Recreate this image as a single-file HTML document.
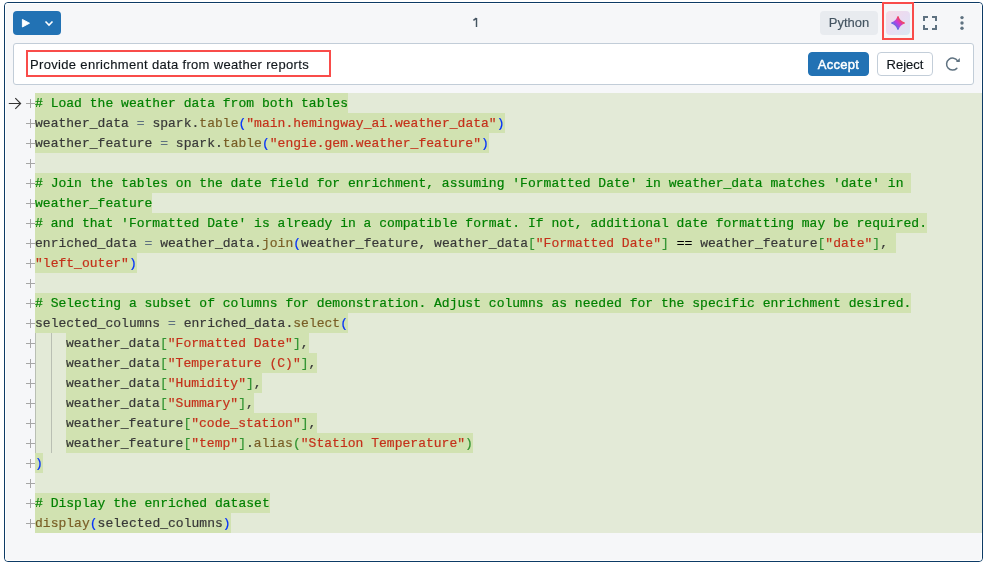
<!DOCTYPE html>
<html><head><meta charset="utf-8">
<style>
html,body{margin:0;padding:0;background:#fff;width:985px;height:565px;overflow:hidden;}
body{position:relative;font-family:"Liberation Sans",sans-serif;}
.pypill,.num,.ptext,.btn,.tx{will-change:transform;}
.pypill,.ptext,.reject{-webkit-text-stroke:0.15px currentColor;}
.cell{position:absolute;left:4px;top:2px;width:979px;height:560px;box-sizing:border-box;border:1px solid #0d3b66;border-radius:4px;background:#fff;}
.cellin{position:absolute;left:0;top:0;right:0;bottom:0;border:1px solid #fff;border-radius:3px;background:#f6f7f9;overflow:hidden;}
.abs{position:absolute;}
.run{position:absolute;left:13px;top:11px;width:48px;height:24px;background:#2272b4;border-radius:4px;}
.num{position:absolute;left:472px;top:15px;font-size:13px;color:#445461;line-height:16px;}
.pypill{position:absolute;left:820px;top:11px;width:58px;height:24px;background:#e8ebef;border-radius:4px;color:#445461;font-size:13px;line-height:24px;text-align:center;}
.ai{position:absolute;left:886px;top:11px;width:24px;height:24px;border-radius:4px;background:linear-gradient(135deg,#f6dbe5,#e9dcf2 50%,#d8e8f3);}
.redbox{position:absolute;box-sizing:border-box;border:2px solid #f94c4a;}
.prompt{position:absolute;left:13px;top:43px;width:961px;height:42px;box-sizing:border-box;border:1px solid #c2cdd8;border-radius:3px;background:#fff;}
.ptext{position:absolute;left:30px;top:57px;font-size:13px;line-height:16px;color:#11171c;white-space:nowrap;letter-spacing:0.33px;}
.btn{position:absolute;top:52px;height:24px;box-sizing:border-box;border-radius:4px;font-size:13px;line-height:24px;text-align:center;}
.accept{left:808px;width:61px;background:#2272b4;color:#fff;border:1px solid #2272b4;-webkit-text-stroke:0.45px #fff;letter-spacing:0.3px;}
.reject{left:877px;width:56px;background:#fff;color:#11171c;border:1px solid #c3ced9;}
.code{position:absolute;left:35px;top:93px;width:947px;height:440px;background:#e3ead7;}
.ln{position:absolute;left:35px;height:20px;width:947px;}
.hl{position:absolute;top:0;height:20px;background:#d1e2b1;}
.tx{position:absolute;top:1px;-webkit-text-stroke:0.2px currentColor;height:20px;line-height:20px;font-family:"Liberation Mono",monospace;font-size:13px;white-space:pre;color:#333;letter-spacing:0.023px;}
.g{position:absolute;top:0;width:1px;height:20px;background:#b9bfb3;}
.pl{position:absolute;left:26px;width:9px;height:9px;margin-top:6px;}
.pl:before{content:"";position:absolute;left:0;top:4px;width:9px;height:1px;background:#a6a6a6;}
.pl:after{content:"";position:absolute;left:4px;top:0;width:1px;height:9px;background:#a6a6a6;}
.tx span{-webkit-text-stroke:0.2px currentColor}.c{color:#008000}.i{color:#383838}.o{color:#5f7281}.e{color:#000}.f{color:#795e26}.s{color:#c4301a}.b1{color:#0431fa}.b2{color:#319331}
</style></head>
<body>
<div class="cell"><div class="cellin"></div></div>
<div class="run"><svg width="48" height="24" viewBox="0 0 48 24" style="position:absolute;left:0;top:0">
<path d="M9.4 8.4 L9.4 16 L16.5 12.2 Z" fill="#fff" stroke="#fff" stroke-width="0.9" stroke-linejoin="round"/>
<path d="M32.5 10.5 L36 14 L39.5 10.5" fill="none" stroke="#fff" stroke-width="1.6"/>
</svg></div>
<svg class="abs" style="left:470px;top:15px" width="10" height="14" viewBox="0 0 10 14"><path d="M6.5 12 V3.1 M6.4 3.1 L3.4 5.4" fill="none" stroke="#445461" stroke-width="1.45" stroke-linecap="butt" stroke-linejoin="round"/></svg>
<div class="pypill">Python</div>
<div class="ai"><svg width="24" height="24" viewBox="0 0 24 24" style="position:absolute;left:0;top:0">
<defs><linearGradient id="sg" gradientUnits="userSpaceOnUse" x1="16" y1="8" x2="8" y2="16"><stop offset="0.08" stop-color="#f5444b"/><stop offset="0.5" stop-color="#c93bdc"/><stop offset="1" stop-color="#3f78e6"/></linearGradient></defs>
<path d="M12 5.6 Q13.6 10.4 18.4 12 Q13.6 13.6 12 18.4 Q10.4 13.6 5.6 12 Q10.4 10.4 12 5.6 Z" fill="url(#sg)" stroke="url(#sg)" stroke-width="1.2" stroke-linejoin="round"/>
</svg></div>
<div class="redbox" style="left:882px;top:2px;width:32px;height:38px;"></div>
<svg class="abs" style="left:923px;top:16px" width="14" height="14" viewBox="0 0 14 14">
<path d="M1 5 V1 H5 M9 1 H13 V5 M13 9 V13 H9 M5 13 H1 V9" fill="none" stroke="#5f7281" stroke-width="2"/>
</svg>
<svg class="abs" style="left:958px;top:14px" width="8" height="18" viewBox="0 0 8 18">
<circle cx="4" cy="3.6" r="1.7" fill="#5f7281"/><circle cx="4" cy="9" r="1.7" fill="#5f7281"/><circle cx="4" cy="14.2" r="1.7" fill="#5f7281"/>
</svg>
<div class="prompt"></div>
<div class="redbox" style="left:26px;top:50px;width:305px;height:27px;"></div>
<div class="ptext">Provide enrichment data from weather reports</div>
<div class="btn accept">Accept</div>
<div class="btn reject">Reject</div>
<svg class="abs" style="left:944px;top:55px" width="18" height="18" viewBox="0 0 18 18">
<path d="M13.6 5.8 A6 6 0 1 0 12.8 13.4" fill="none" stroke="#5f7281" stroke-width="1.5" stroke-linecap="round"/>
<path d="M15.8 3.0 L15.8 6.9 L11.9 6.9 Z" fill="#5f7281"/>
</svg>
<div class="code"></div>
<svg class="abs" style="left:8px;top:97px" width="14" height="13" viewBox="0 0 14 13">
<path d="M0.8 6.5 H12.6 M7.3 1.2 L12.6 6.5 L7.3 11.8" fill="none" stroke="#333" stroke-width="1.15"/>
</svg>
<div class="ln" style="top:93px"><div class="hl" style="left:0.000px;width:313.000px"></div><div class="tx" style="left:0.000px"><span class="c">#&nbsp;Load&nbsp;the&nbsp;weather&nbsp;data&nbsp;from&nbsp;both&nbsp;tables</span></div></div><div class="pl" style="top:93px"></div>
<div class="ln" style="top:113px"><div class="hl" style="left:0.000px;width:469.500px"></div><div class="tx" style="left:0.000px"><span class="i">weather_data</span><span class="p">&nbsp;</span><span class="o">=</span><span class="p">&nbsp;</span><span class="i">spark.</span><span class="f">table</span><span class="b1">(</span><span class="s">&quot;main.hemingway_ai.weather_data&quot;</span><span class="b1">)</span></div></div><div class="pl" style="top:113px"></div>
<div class="ln" style="top:133px"><div class="hl" style="left:0.000px;width:453.850px"></div><div class="tx" style="left:0.000px"><span class="i">weather_feature</span><span class="p">&nbsp;</span><span class="o">=</span><span class="p">&nbsp;</span><span class="i">spark.</span><span class="f">table</span><span class="b1">(</span><span class="s">&quot;engie.gem.weather_feature&quot;</span><span class="b1">)</span></div></div><div class="pl" style="top:133px"></div>
<div class="ln" style="top:153px"><div class="tx" style="left:0.000px"></div></div><div class="pl" style="top:153px"></div>
<div class="ln" style="top:173px"><div class="hl" style="left:0.000px;width:876.400px"></div><div class="tx" style="left:0.000px"><span class="c">#&nbsp;Join&nbsp;the&nbsp;tables&nbsp;on&nbsp;the&nbsp;date&nbsp;field&nbsp;for&nbsp;enrichment,&nbsp;assuming&nbsp;&#x27;Formatted&nbsp;Date&#x27;&nbsp;in&nbsp;weather_data&nbsp;matches&nbsp;&#x27;date&#x27;&nbsp;in&nbsp;</span></div></div><div class="pl" style="top:173px"></div>
<div class="ln" style="top:193px"><div class="hl" style="left:0.000px;width:117.375px"></div><div class="tx" style="left:0.000px"><span class="c">weather_feature</span></div></div><div class="pl" style="top:193px"></div>
<div class="ln" style="top:213px"><div class="hl" style="left:0.000px;width:892.050px"></div><div class="tx" style="left:0.000px"><span class="c">#&nbsp;and&nbsp;that&nbsp;&#x27;Formatted&nbsp;Date&#x27;&nbsp;is&nbsp;already&nbsp;in&nbsp;a&nbsp;compatible&nbsp;format.&nbsp;If&nbsp;not,&nbsp;additional&nbsp;date&nbsp;formatting&nbsp;may&nbsp;be&nbsp;required.</span></div></div><div class="pl" style="top:213px"></div>
<div class="ln" style="top:233px"><div class="hl" style="left:0.000px;width:860.750px"></div><div class="tx" style="left:0.000px"><span class="i">enriched_data</span><span class="p">&nbsp;</span><span class="o">=</span><span class="p">&nbsp;</span><span class="i">weather_data.</span><span class="f">join</span><span class="b1">(</span><span class="i">weather_feature,&nbsp;weather_data</span><span class="b2">[</span><span class="s">&quot;Formatted&nbsp;Date&quot;</span><span class="b2">]</span><span class="p">&nbsp;</span><span class="e">==</span><span class="p">&nbsp;</span><span class="i">weather_feature</span><span class="b2">[</span><span class="s">&quot;date&quot;</span><span class="b2">]</span><span class="i">,&nbsp;</span></div></div><div class="pl" style="top:233px"></div>
<div class="ln" style="top:253px"><div class="hl" style="left:0.000px;width:101.725px"></div><div class="tx" style="left:0.000px"><span class="s">&quot;left_outer&quot;</span><span class="b1">)</span></div></div><div class="pl" style="top:253px"></div>
<div class="ln" style="top:273px"><div class="tx" style="left:0.000px"></div></div><div class="pl" style="top:273px"></div>
<div class="ln" style="top:293px"><div class="hl" style="left:0.000px;width:876.400px"></div><div class="tx" style="left:0.000px"><span class="c">#&nbsp;Selecting&nbsp;a&nbsp;subset&nbsp;of&nbsp;columns&nbsp;for&nbsp;demonstration.&nbsp;Adjust&nbsp;columns&nbsp;as&nbsp;needed&nbsp;for&nbsp;the&nbsp;specific&nbsp;enrichment&nbsp;desired.</span></div></div><div class="pl" style="top:293px"></div>
<div class="ln" style="top:313px"><div class="hl" style="left:0.000px;width:313.000px"></div><div class="tx" style="left:0.000px"><span class="i">selected_columns</span><span class="p">&nbsp;</span><span class="o">=</span><span class="p">&nbsp;</span><span class="i">enriched_data.</span><span class="f">select</span><span class="b1">(</span></div></div><div class="pl" style="top:313px"></div>
<div class="ln" style="top:333px"><div class="hl" style="left:31.300px;width:242.575px"></div><div class="g" style="left:0"></div><div class="g" style="left:16px"></div><div class="tx" style="left:31.300px"><span class="i">weather_data</span><span class="b2">[</span><span class="s">&quot;Formatted&nbsp;Date&quot;</span><span class="b2">]</span><span class="i">,</span></div></div><div class="pl" style="top:333px"></div>
<div class="ln" style="top:353px"><div class="hl" style="left:31.300px;width:250.400px"></div><div class="g" style="left:0"></div><div class="g" style="left:16px"></div><div class="tx" style="left:31.300px"><span class="i">weather_data</span><span class="b2">[</span><span class="s">&quot;Temperature&nbsp;(C)&quot;</span><span class="b2">]</span><span class="i">,</span></div></div><div class="pl" style="top:353px"></div>
<div class="ln" style="top:373px"><div class="hl" style="left:31.300px;width:195.625px"></div><div class="g" style="left:0"></div><div class="g" style="left:16px"></div><div class="tx" style="left:31.300px"><span class="i">weather_data</span><span class="b2">[</span><span class="s">&quot;Humidity&quot;</span><span class="b2">]</span><span class="i">,</span></div></div><div class="pl" style="top:373px"></div>
<div class="ln" style="top:393px"><div class="hl" style="left:31.300px;width:187.800px"></div><div class="g" style="left:0"></div><div class="g" style="left:16px"></div><div class="tx" style="left:31.300px"><span class="i">weather_data</span><span class="b2">[</span><span class="s">&quot;Summary&quot;</span><span class="b2">]</span><span class="i">,</span></div></div><div class="pl" style="top:393px"></div>
<div class="ln" style="top:413px"><div class="hl" style="left:31.300px;width:250.400px"></div><div class="g" style="left:0"></div><div class="g" style="left:16px"></div><div class="tx" style="left:31.300px"><span class="i">weather_feature</span><span class="b2">[</span><span class="s">&quot;code_station&quot;</span><span class="b2">]</span><span class="i">,</span></div></div><div class="pl" style="top:413px"></div>
<div class="ln" style="top:433px"><div class="hl" style="left:31.300px;width:406.900px"></div><div class="g" style="left:0"></div><div class="g" style="left:16px"></div><div class="tx" style="left:31.300px"><span class="i">weather_feature</span><span class="b2">[</span><span class="s">&quot;temp&quot;</span><span class="b2">]</span><span class="i">.</span><span class="f">alias</span><span class="b2">(</span><span class="s">&quot;Station&nbsp;Temperature&quot;</span><span class="b2">)</span></div></div><div class="pl" style="top:433px"></div>
<div class="ln" style="top:453px"><div class="hl" style="left:0.000px;width:7.825px"></div><div class="tx" style="left:0.000px"><span class="b1">)</span></div></div><div class="pl" style="top:453px"></div>
<div class="ln" style="top:473px"><div class="tx" style="left:0.000px"></div></div><div class="pl" style="top:473px"></div>
<div class="ln" style="top:493px"><div class="hl" style="left:0.000px;width:234.750px"></div><div class="tx" style="left:0.000px"><span class="c">#&nbsp;Display&nbsp;the&nbsp;enriched&nbsp;dataset</span></div></div><div class="pl" style="top:493px"></div>
<div class="ln" style="top:513px"><div class="hl" style="left:0.000px;width:195.625px"></div><div class="tx" style="left:0.000px"><span class="f">display</span><span class="b1">(</span><span class="i">selected_columns</span><span class="b1">)</span></div></div><div class="pl" style="top:513px"></div>
</body></html>
